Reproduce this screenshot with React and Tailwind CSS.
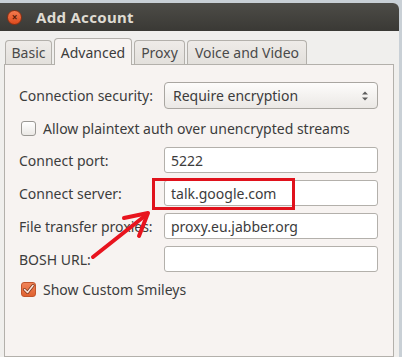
import { useState } from "react";

const font = { fontFamily: '"Noto Sans", "Open Sans", sans-serif' };

const tabs = [
  { label: "Basic", w: "w-[47px]" },
  { label: "Advanced", w: "w-[78px]", active: true },
  { label: "Proxy", w: "w-[51px]" },
  { label: "Voice and Video", w: "w-[120px]" },
];

const fields = [
  { label: "Connect port:", value: "5222" },
  { label: "Connect server:", value: "talk.google.com" },
  { label: "File transfer proxies:", value: "proxy.eu.jabber.org" },
  { label: "BOSH URL:", value: "" },
];

function Checkbox({ checked }) {
  if (checked) {
    return (
      <span className="w-[15px] h-[15px] rounded-[3px] border border-[#c2552c] bg-gradient-to-b from-[#f08459] to-[#e0612f] flex items-center justify-center">
        <svg width="13" height="13" viewBox="0 0 13 13">
          <path d="M2.5 6.5 L5.5 9.5 L11 2.5" fill="none" stroke="#7a3218" strokeWidth="3" strokeLinecap="round" strokeLinejoin="round" />
          <path d="M2.5 6.5 L5.5 9.5 L11 2.5" fill="none" stroke="#fbe4da" strokeWidth="1.6" strokeLinecap="round" strokeLinejoin="round" />
        </svg>
      </span>
    );
  }
  return (
    <span className="w-[15px] h-[15px] rounded-[3px] border border-[#9a9894] bg-gradient-to-b from-white to-[#ebe8e5]" />
  );
}

export default function App() {
  const [security] = useState("Require encryption");

  return (
    <div
      className="relative w-[402px] h-[357px] overflow-hidden bg-[#c9d0d6] pt-[3px] text-[#3c3c3c]"
      style={font}
    >
      <div className="w-[399px] h-[354px] bg-[#f0efed] rounded-tr-[6px] flex flex-col">
        {/* Title bar */}
        <div className="h-[28px] rounded-tr-[6px] bg-gradient-to-b from-[#4d4c47] to-[#3a3935] flex items-center pl-[7px]">
          <span className="w-[15px] h-[15px] rounded-full bg-gradient-to-b from-[#f47a4d] to-[#dd4a1c] border border-[#8c2f12] flex items-center justify-center text-[#5a1c08] text-[10px] font-bold leading-none">
            ×
          </span>
          <span className="ml-[14px] text-[15px] font-bold text-[#dfdbd2] tracking-[0.3px]">
            Add Account
          </span>
        </div>

        {/* Tabs */}
        <div className="flex items-end gap-[2px] pl-[5px] mt-[6px] h-[27px] relative z-10">
          {tabs.map((t) =>
            t.active ? (
              <div
                key={t.label}
                className={`${t.w} h-[27px] -mb-px border border-b-0 border-[#b3b0ab] rounded-t-[4px] bg-[#f7f3f1] flex items-center justify-center text-[14px]`}
              >
                {t.label}
              </div>
            ) : (
              <div
                key={t.label}
                className={`${t.w} h-[24px] border border-b-0 border-[#b3b0ab] rounded-t-[4px] bg-gradient-to-b from-[#eeebe8] to-[#e3e0dc] flex items-center justify-center text-[14px] text-[#4a4a4a]`}
              >
                {t.label}
              </div>
            )
          )}
        </div>

        {/* Panel */}
        <div className="ml-[4px] w-[390px] flex-1 border border-[#b3b0ab] bg-[#f7f3f1] pl-[14px] pr-[15px] pt-[17px] text-[14px]">
          <div className="flex items-center h-[27px]">
            <span className="w-[145px]">Connection security:</span>
            <div className="w-[214px] h-[27px] rounded-[4px] border border-[#a9a6a1] bg-gradient-to-b from-[#fdfcfb] to-[#ebe8e5] flex items-center pl-[8px] pr-[8px]">
              <span className="flex-1">{security}</span>
              <svg width="8" height="12" viewBox="0 0 8 12">
                <path d="M1 4.5 L4 1.5 L7 4.5 Z" fill="#5c5c5c" />
                <path d="M1 7.5 L4 10.5 L7 7.5 Z" fill="#5c5c5c" />
              </svg>
            </div>
          </div>

          <div className="flex items-center h-[26px] mt-[6px] pl-[2px] gap-[7px]">
            <Checkbox />
            <span>Allow plaintext auth over unencrypted streams</span>
          </div>

          <div className="flex flex-col gap-[7px] mt-[6px]">
            {fields.map((f) => (
              <div key={f.label} className="flex items-center h-[26px]">
                <span className="w-[145px]">{f.label}</span>
                <div className="w-[214px] h-[26px] rounded-[3px] border border-[#b3b0ab] bg-white flex items-center pl-[6px]">
                  {f.value}
                </div>
              </div>
            ))}
          </div>

          <div className="flex items-center h-[26px] mt-[4px] pl-[2px] gap-[7px]">
            <Checkbox checked />
            <span>Show Custom Smileys</span>
          </div>
        </div>
      </div>

      {/* Annotation: red box + arrow */}
      <div className="absolute left-[152px] top-[178px] w-[143px] h-[32px] border-[3px] border-[#e0121c]" />
      <svg className="absolute left-0 top-0" width="402" height="357" viewBox="0 0 402 357">
        <g stroke="#e8141e" strokeWidth="4" strokeLinecap="round" strokeLinejoin="round" fill="none">
          <path d="M93 257 L146 215" />
          <path d="M124 218 L148 213 L139 236" />
        </g>
      </svg>
    </div>
  );
}
